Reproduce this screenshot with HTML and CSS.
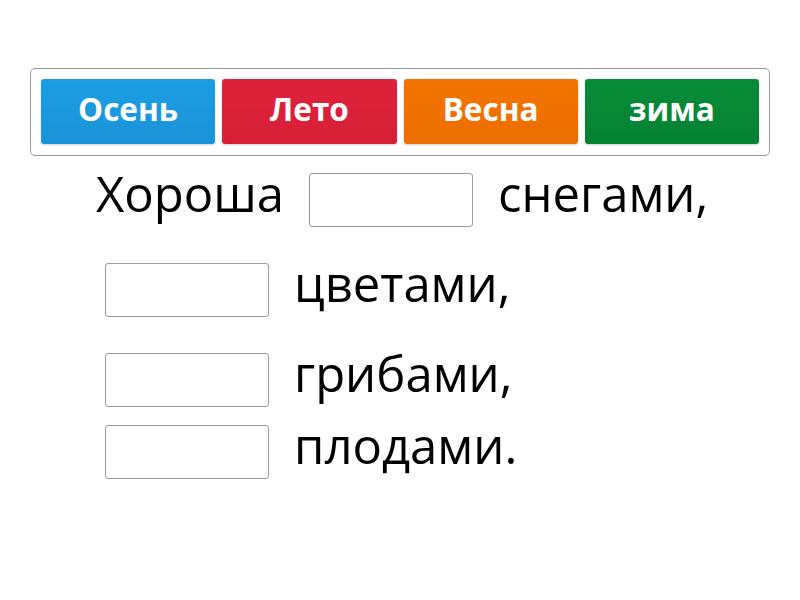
FILE: index.html
```html
<!DOCTYPE html>
<html lang="ru">
<head>
  <meta charset="UTF-8" />
  <meta name="viewport" content="width=device-width, initial-scale=1" />
  <title>Времена года</title>
  <link rel="stylesheet" href="styles.css">
</head>
<body>

  <div class="bank">
    <div class="word blue">Осень</div>
    <div class="word red">Лето</div>
    <div class="word orange">Весна</div>
    <div class="word green">зима</div>
  </div>

  <div class="sentence">
    <div class="line first">
      <span>Хороша</span>
      <span class="gap"></span>
      <span>снегами,</span>
    </div>
    <div class="line">
      <span class="gap"></span>
      <span>цветами,</span>
    </div>
    <div class="line">
      <span class="gap"></span>
      <span>грибами,</span>
    </div>
    <div class="line tight">
      <span class="gap"></span>
      <span>плодами.</span>
    </div>
  </div>

</body>
</html>
```

FILE: styles.css
```css
body {
  font-family: 'Open Sans', 'Noto Sans', sans-serif;
  background-color: #fff;
  color: #000;
  margin: 0;
  padding: 0;
}

.bank {
  display: flex;
  gap: 7px;
  width: 718px;
  margin: 68px 0 0 30px;
  padding: 10px 10px 11px 10px;
  border: 1px solid #9a9a9a;
  border-radius: 5px;
}

.word {
  flex: 1;
  height: 65px;
  box-sizing: border-box;
  padding-bottom: 6px;
  display: flex;
  align-items: center;
  justify-content: center;
  color: #fff;
  font-size: 31.5px;
  font-weight: bold;
  border-radius: 3px;
  box-shadow: 0 1px 2px rgba(0,0,0,0.2);
}

.blue {
  background: linear-gradient(#1c9fe3, #1a92d8);
}

.red {
  background: linear-gradient(#e0223c, #d51f37);
}

.orange {
  background: linear-gradient(#f47400, #ec6d00);
}

.green {
  background: linear-gradient(#078c3a, #058233);
}

.sentence {
  margin: 17px 0 0 96px;
  font-size: 49px;
  line-height: 40px;
}

.line {
  display: flex;
  align-items: flex-start;
  gap: 25px;
  margin-top: 36px;
}

.line.first {
  margin-top: 0;
}

.line.tight {
  margin-top: 18px;
}

.gap {
  width: 162px;
  height: 52px;
  margin-left: 9px;
  border: 1px solid #9a9a9a;
  border-radius: 3px;
}

.line.first .gap {
  margin-left: 0;
}
```
